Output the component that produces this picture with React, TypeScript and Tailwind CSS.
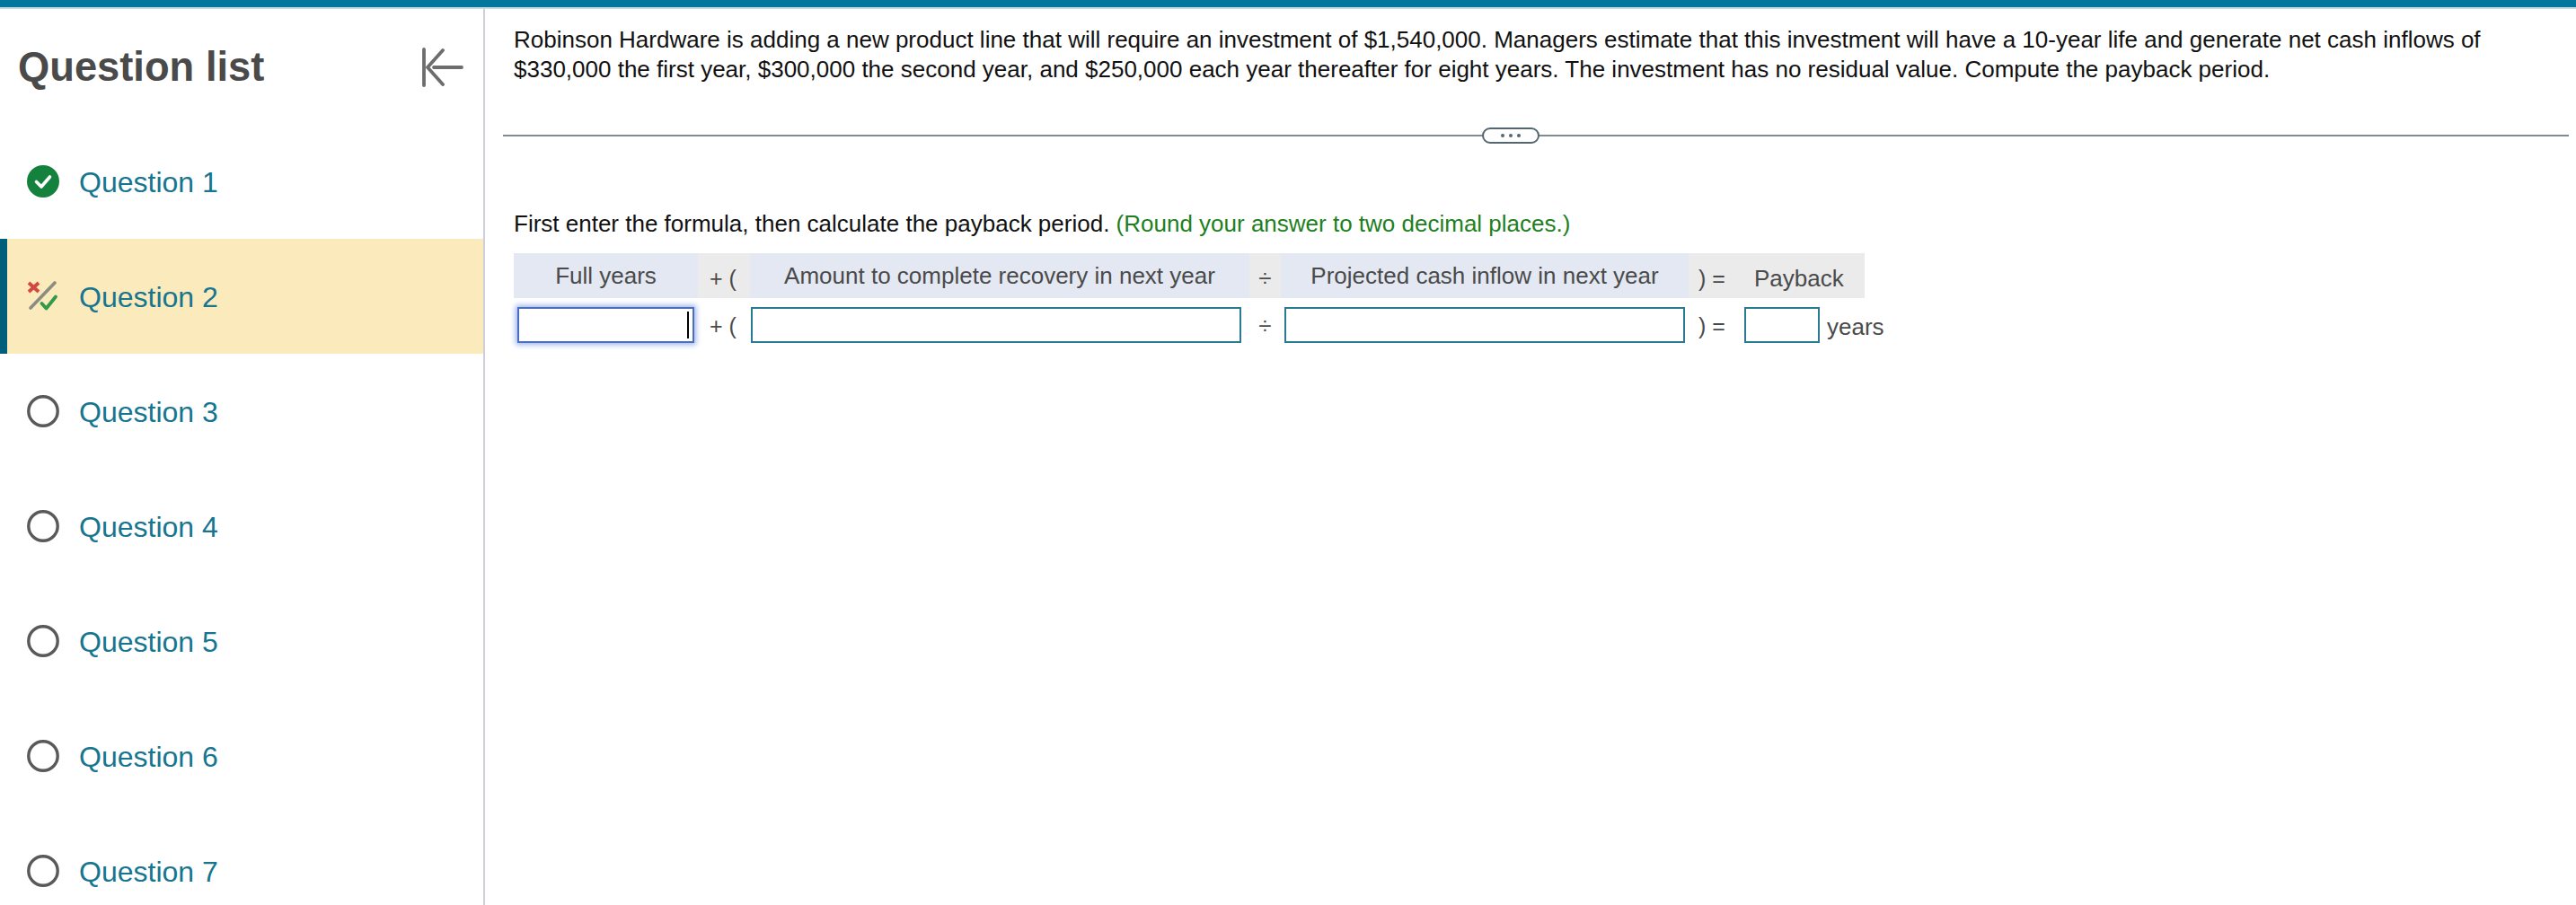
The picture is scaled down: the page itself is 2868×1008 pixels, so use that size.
const font = { fontFamily: '"Liberation Sans", Arial, sans-serif' };

function DoneIcon() {
  return (
    <svg width="36" height="36" viewBox="0 0 36 36" className="shrink-0">
      <circle cx="18" cy="18" r="18" fill="#14823c" />
      <path d="M10.5 18.5l5.5 5.5 9.5-11" fill="none" stroke="#fff" strokeWidth="3.6" strokeLinecap="round" strokeLinejoin="round" />
    </svg>
  );
}

function PartialIcon() {
  return (
    <svg width="36" height="36" viewBox="0 0 36 36" className="shrink-0">
      <path d="M4 31L31 3" stroke="#8c8c80" strokeWidth="3.6" strokeLinecap="round" />
      <path d="M2 3l11 10M13 3L2 13" stroke="#d2493f" strokeWidth="3.8" />
      <path d="M16.5 26l5 5.5 10.5-13" fill="none" stroke="#2f9a4a" strokeWidth="3.8" strokeLinecap="round" strokeLinejoin="round" />
    </svg>
  );
}

function EmptyIcon() {
  return (
    <svg width="36" height="36" viewBox="0 0 36 36" className="shrink-0">
      <circle cx="18" cy="18" r="16.2" fill="none" stroke="#58595b" strokeWidth="3.4" />
    </svg>
  );
}

function Row({ n, active, icon }: { n: number; active?: boolean; icon: React.ReactNode }) {
  return (
    <div className={active ? "flex h-32 items-center gap-[22px] border-l-8 border-[#005e7d] bg-[#fbeabc] pl-[22px]" : "flex h-32 items-center gap-[22px] pl-[30px]"}>
      {icon}
      <span className="pt-px text-[32px] text-[#16758f]">Question {n}</span>
    </div>
  );
}

export default function App() {
  const input = "h-10 border-2 border-[#2a7a93] bg-white";
  return (
    <div style={font} className="flex h-[1008px] flex-col overflow-hidden bg-white">
      <div className="h-2 shrink-0 bg-[#04789c]" />
      <div className="h-0.5 shrink-0 bg-[#c9dbe6]" />
      <div className="flex min-h-0 flex-1">
        <aside className="w-[540px] shrink-0 border-r-2 border-[#cdd0d8]">
          <div className="flex h-[128px] items-center justify-between pl-[20px] pr-[22px] pt-0.5">
            <h1 className="text-[45.3px] font-bold text-[#4a4a4a]">Question list</h1>
            <svg width="46" height="44" viewBox="0 0 46 44" fill="none" stroke="#6d6d6d" strokeWidth="3.8" strokeLinecap="round" strokeLinejoin="round">
              <path d="M2 2v40M44 22H13M23 3L6 22l17 19" />
            </svg>
          </div>
          <Row n={1} icon={<DoneIcon />} />
          <Row n={2} active icon={<PartialIcon />} />
          <Row n={3} icon={<EmptyIcon />} />
          <Row n={4} icon={<EmptyIcon />} />
          <Row n={5} icon={<EmptyIcon />} />
          <Row n={6} icon={<EmptyIcon />} />
          <Row n={7} icon={<EmptyIcon />} />
        </aside>
        <main className="min-w-0 flex-1">
          <p className="pl-8 pr-[60px] pt-[18px] text-[26px] leading-[33px] text-[#111]">
            Robinson Hardware is adding a new product line that will require an investment of $1,540,000. Managers estimate that this investment will have a 10-year life and generate net cash inflows of $330,000 the first year, $300,000 the second year, and $250,000 each year thereafter for eight years. The investment has no residual value. Compute the payback period.
          </p>
          <div className="relative ml-5 mr-2 mt-[56px] h-0.5 bg-[#7f8a92]">
            <div className="absolute left-[1090px] top-[-8px] flex h-[18px] w-[64px] items-center justify-center gap-[5px] rounded-full border-2 border-[#56666f] bg-white">
              <span className="size-1 rounded-full bg-[#56666f]" />
              <span className="size-1 rounded-full bg-[#56666f]" />
              <span className="size-1 rounded-full bg-[#56666f]" />
            </div>
          </div>
          <p className="pl-8 pt-[81px] text-[26px] leading-[33px] text-[#111]">
            First enter the formula, then calculate the payback period. <span className="text-[#1d7f1d]">(Round your answer to two decimal places.)</span>
          </p>
          <div className="ml-8 mt-[16px] grid w-[1504px] grid-cols-[205px_58px_556px_35px_454px_60px_136px] grid-rows-[50px_50px] text-[26px] text-[#4a4a4a]">
            <div className="flex items-center justify-center bg-[#e3e8f2] pt-px">Full years</div>
            <div className="flex items-center bg-[#ebebeb] pl-[13px] pt-[7px] text-[25px]">+ (</div>
            <div className="flex items-center justify-center bg-[#e3e8f2] pt-px">Amount to complete recovery in next year</div>
            <div className="flex items-center justify-center bg-[#ebebeb] pt-[7px]">÷</div>
            <div className="flex items-center justify-center bg-[#e3e8f2] pt-px">Projected cash inflow in next year</div>
            <div className="flex items-center bg-[#ebebeb] pl-[11px] pt-[7px] text-[25px]">) =</div>
            <div className="flex items-center bg-[#ebebeb] pl-[13px] pt-[7px]">Payback</div>

            <div className="flex items-end px-1">
              <div className="relative h-10 w-full border-2 border-[#4a6fc0] bg-white shadow-[0_0_6px_2px_#9db4ea]">
                <span className="absolute right-1 top-[3px] h-[30px] w-0.5 bg-black" />
              </div>
            </div>
            <div className="flex items-end pl-[13px] text-[25px]"><span className="leading-[38px]">+ (</span></div>
            <div className="flex items-end pl-px pr-[9px]"><div className={`${input} w-full`} /></div>
            <div className="flex items-end justify-center"><span className="leading-[38px]">÷</span></div>
            <div className="flex items-end px-1"><div className={`${input} w-full`} /></div>
            <div className="flex items-end pl-[11px] text-[25px]"><span className="leading-[38px]">) =</span></div>
            <div className="flex items-end gap-2 pl-0.5">
              <div className={`${input} w-[84px] shrink-0`} />
              <span className="whitespace-nowrap leading-[36px]">years</span>
            </div>
          </div>
        </main>
      </div>
    </div>
  );
}
